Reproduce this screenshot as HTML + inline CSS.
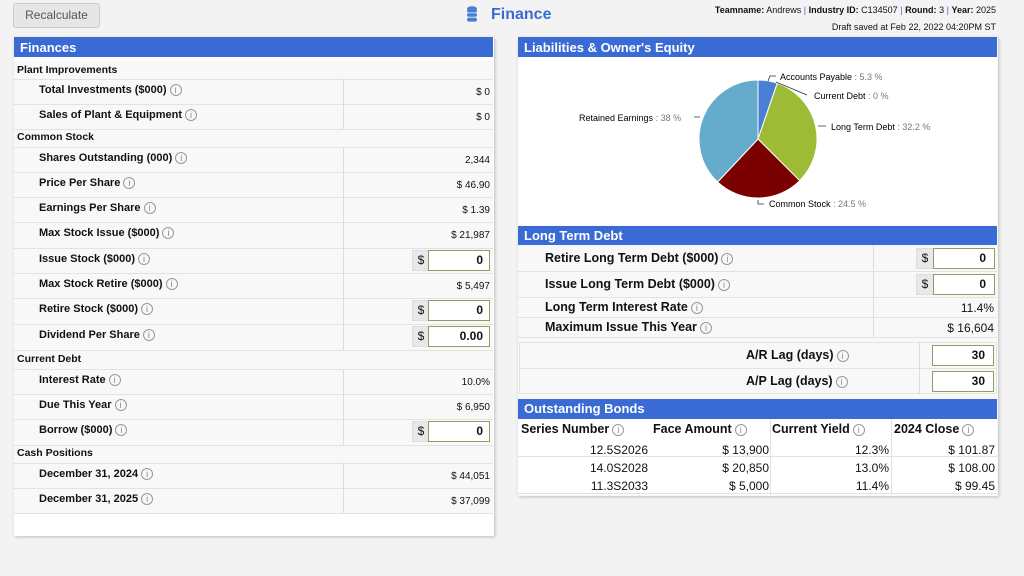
<!DOCTYPE html><html><head><style>
*{box-sizing:border-box;margin:0;padding:0}
body{width:1024px;height:576px;background:#f3f3f3;font-family:"Liberation Sans",Tahoma,sans-serif;position:relative;overflow:hidden;color:#111}
.a{position:absolute}
.hdr{background:#3a6bd4;color:#fff;font-weight:bold;font-size:13px;padding:3px 6px;height:20px}
.lbl{font-weight:bold;font-size:11px}
.sec{font-weight:bold;font-size:10.5px}
.val{font-size:10px;text-align:right}
.line{height:1px;background:#e2e2e2}
.i{display:inline-block;width:12px;height:12px;border:1px solid #999;border-radius:50%;font-size:9px;line-height:10px;text-align:center;color:#888;font-weight:normal;vertical-align:middle;margin-left:3px}
.inp{border:1px solid #8aa060;background:#fff;font-weight:bold;font-size:12px;text-align:right;padding:2px 8px 0 0;height:21px}
.dol{background:#e8e8e8;border:1px solid #ddd;font-size:12px;text-align:center;height:21px;line-height:19px;width:18px}
</style></head><body>
<div class="a" style="left:13px;top:3px;width:87px;height:25px;background:#e6e6e6;border:1px solid #ccc;border-radius:3px;font-size:12px;color:#555;text-align:center;line-height:23px">Recalculate</div>
<svg class="a" style="left:466px;top:6px" width="12" height="18"><g fill="#4a7fd6"><ellipse cx="6" cy="2.5" rx="5" ry="2.2"/><rect x="1" y="3" width="10" height="3.5" rx="1.5"/><rect x="1" y="7.3" width="10" height="3.5" rx="1.5"/><rect x="1" y="11.6" width="10" height="4" rx="2"/></g></svg>
<div class="a" style="left:491px;top:6px;color:#3a6bd4;font-size:16px;font-weight:bold">Finance</div>
<div class="a" style="right:28px;top:5px;font-size:9px"><b>Teamname:</b> Andrews <span style="color:#3a6bd4">|</span> <b>Industry ID:</b> C134507 <span style="color:#3a6bd4">|</span> <b>Round:</b> 3 <span style="color:#3a6bd4">|</span> <b>Year:</b> 2025</div>
<div class="a" style="right:28px;top:22px;font-size:9px">Draft saved at Feb 22, 2022 04:20PM ST</div>

<div class="a" style="left:14px;top:37px;width:480px;height:499px;background:#fff;box-shadow:1px 1px 3px #bbb"></div>
<div class="a hdr" style="left:14px;top:37px;width:479px">Finances</div>
<div class="a" style="left:14px;top:61px;width:479px;height:452px;background:#f8f8f8"></div>
<div id="L"></div>

<div class="a" style="left:518px;top:37px;width:480px;height:459px;background:#f8f8f8;box-shadow:1px 1px 3px #bbb"></div>
<div class="a hdr" style="left:518px;top:37px;width:479px">Liabilities &amp; Owner's Equity</div>
<div class="a" style="left:518px;top:57px;width:479px;height:168px;background:#fff"></div>
<svg class="a" style="left:0;top:0" width="1024" height="576">
<path d="M758,139 L758,80 A59,59 0 0 1 777.3,83.2 Z" fill="#4a7fd6" stroke="#fff" stroke-width="1"/>
<path d="M758,139 L777.3,83.2 A59,59 0 0 1 799.7,180.7 Z" fill="#9dbb35" stroke="#fff" stroke-width="1"/>
<path d="M758,139 L799.7,180.7 A59,59 0 0 1 717.6,182 Z" fill="#7b0000" stroke="#fff" stroke-width="1"/>
<path d="M758,139 L717.6,182 A59,59 0 0 1 758,80 Z" fill="#65abcb" stroke="#fff" stroke-width="1"/>
<path d="M768,81 L770,76 L776,76 M776,82 L807,95 M818,126 L826,126 M700,117 L694,117 M758,200 L758,204 L764,204" stroke="#333" fill="none" stroke-width="0.8"/>
<g font-family="Liberation Sans,sans-serif" font-size="9">
<text x="780" y="80">Accounts Payable <tspan fill="#777">: 5.3 %</tspan></text>
<text x="814" y="99">Current Debt <tspan fill="#777">: 0 %</tspan></text>
<text x="831" y="130">Long Term Debt <tspan fill="#777">: 32.2 %</tspan></text>
<text x="579" y="121">Retained Earnings <tspan fill="#777">: 38 %</tspan></text>
<text x="769" y="207">Common Stock <tspan fill="#777">: 24.5 %</tspan></text>
</g></svg>
<div class="a hdr" style="left:518px;top:226px;width:479px;height:19px;padding-top:2px">Long Term Debt</div>
<div class="a" style="left:873px;top:245px;width:1px;height:92px;background:#ddd"></div>
<div class="a line" style="left:518px;top:271px;width:479px"></div>
<div class="a line" style="left:518px;top:297px;width:479px"></div>
<div class="a line" style="left:518px;top:317px;width:479px"></div>
<div class="a line" style="left:518px;top:337px;width:479px"></div>
<div class="a lbl" style="left:545px;top:251px;font-size:12.5px">Retire Long Term Debt ($000)<span class="i">i</span></div>
<div class="a lbl" style="left:545px;top:277px;font-size:12.5px">Issue Long Term Debt ($000)<span class="i">i</span></div>
<div class="a lbl" style="left:545px;top:300px;font-size:12.5px">Long Term Interest Rate<span class="i">i</span></div>
<div class="a lbl" style="left:545px;top:320px;font-size:12.5px">Maximum Issue This Year<span class="i">i</span></div>
<div class="a dol" style="left:916px;top:248px">$</div><div class="a inp" style="left:933px;top:248px;width:62px">0</div>
<div class="a dol" style="left:916px;top:274px">$</div><div class="a inp" style="left:933px;top:274px;width:62px">0</div>
<div class="a" style="right:30px;top:301px;font-size:12px">11.4%</div>
<div class="a" style="right:30px;top:321px;font-size:12px">$ 16,604</div>
<div class="a" style="left:519px;top:342px;width:478px;height:52px;border:1px solid #e2e2e2"></div>
<div class="a line" style="left:519px;top:368px;width:478px"></div>
<div class="a" style="left:919px;top:342px;width:1px;height:52px;background:#ddd"></div>
<div class="a lbl" style="left:746px;top:348px;font-size:12.5px">A/R Lag (days)<span class="i">i</span></div>
<div class="a lbl" style="left:746px;top:374px;font-size:12.5px">A/P Lag (days)<span class="i">i</span></div>
<div class="a inp" style="left:932px;top:345px;width:62px">30</div>
<div class="a inp" style="left:932px;top:371px;width:62px">30</div>
<div class="a hdr" style="left:518px;top:399px;width:479px;height:20px;padding-top:2px">Outstanding Bonds</div>
<div class="a" style="left:518px;top:419px;width:479px;height:76px;background:#fff"></div>
<div class="a" style="left:770px;top:419px;width:1px;height:76px;background:#e2e2e2"></div>
<div class="a" style="left:891px;top:419px;width:1px;height:76px;background:#e2e2e2"></div>
<div class="a line" style="left:518px;top:456px;width:479px"></div>
<div class="a line" style="left:518px;top:493px;width:479px"></div>
<div class="a lbl" style="left:521px;top:422px;font-size:12.5px">Series Number<span class="i">i</span></div>
<div class="a lbl" style="left:653px;top:422px;font-size:12.5px">Face Amount<span class="i">i</span></div>
<div class="a lbl" style="left:772px;top:422px;font-size:12.5px">Current Yield<span class="i">i</span></div>
<div class="a lbl" style="left:894px;top:422px;font-size:12.5px">2024 Close<span class="i">i</span></div>
<div class="a" style="left:560px;top:441px;width:88px;text-align:right;font-size:12px;line-height:18px">12.5S2026<br>14.0S2028<br>11.3S2033</div>
<div class="a" style="left:680px;top:441px;width:89px;text-align:right;font-size:12px;line-height:18px">$ 13,900<br>$ 20,850<br>$ 5,000</div>
<div class="a" style="left:800px;top:441px;width:89px;text-align:right;font-size:12px;line-height:18px">12.3%<br>13.0%<br>11.4%</div>
<div class="a" style="left:900px;top:441px;width:95px;text-align:right;font-size:12px;line-height:18px">$ 101.87<br>$ 108.00<br>$ 99.45</div>

<script>
var rows=[
['s','Plant Improvements',62,79],
['r','Total Investments ($000)',79,104,'$ 0'],
['r','Sales of Plant &amp; Equipment',104,129,'$ 0'],
['s','Common Stock',129,147],
['r','Shares Outstanding (000)',147,172,'2,344'],
['r','Price Per Share',172,197,'$ 46.90'],
['r','Earnings Per Share',197,222,'$ 1.39'],
['r','Max Stock Issue ($000)',222,248,'$ 21,987'],
['r','Issue Stock ($000)',248,273,'i0'],
['r','Max Stock Retire ($000)',273,298,'$ 5,497'],
['r','Retire Stock ($000)',298,324,'i0'],
['r','Dividend Per Share',324,350,'i0.00'],
['s','Current Debt',350,369],
['r','Interest Rate',369,394,'10.0%'],
['r','Due This Year',394,419,'$ 6,950'],
['r','Borrow ($000)',419,445,'i0'],
['s','Cash Positions',445,463],
['r','December 31, 2024',463,488,'$ 44,051'],
['r','December 31, 2025',488,513,'$ 37,099']];
var h='';
rows.forEach(function(r){
 var mid=(r[2]+r[3])/2;
 h+='<div class="a line" style="left:14px;top:'+r[3]+'px;width:479px"></div>';
 if(r[0]=='s'){h+='<div class="a sec" style="left:17px;top:'+(mid-7)+'px">'+r[1]+'</div>';}
 else{
  h+='<div class="a" style="left:343px;top:'+r[2]+'px;width:1px;height:'+(r[3]-r[2])+'px;background:#ddd"></div>';
  h+='<div class="a lbl" style="left:39px;top:'+(mid-8)+'px">'+r[1]+'<span class="i">i</span></div>';
  if(r[4][0]=='i'){
   h+='<div class="a dol" style="left:412px;top:'+(mid-11)+'px">$</div><div class="a inp" style="left:428px;top:'+(mid-11)+'px;width:62px;padding-right:6px">'+r[4].slice(1)+'</div>';
  } else h+='<div class="a val" style="right:534px;top:'+(mid-5)+'px">'+r[4]+'</div>';
 }
});
document.getElementById('L').innerHTML=h;
</script>
</body></html>
